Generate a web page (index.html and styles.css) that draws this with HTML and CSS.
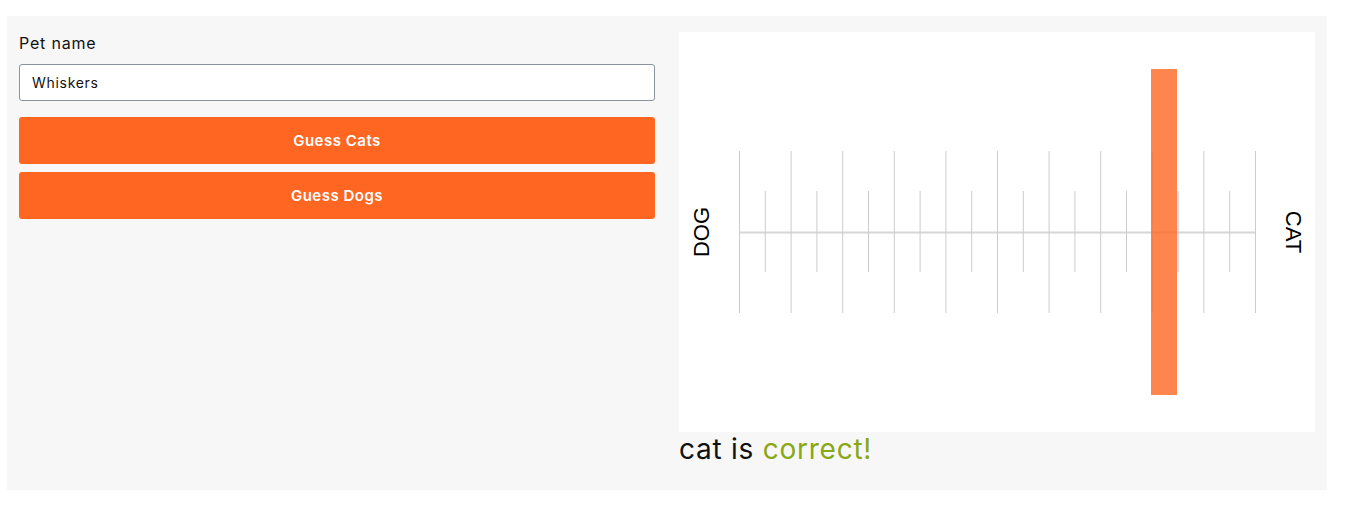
FILE: index.html
```html
<!DOCTYPE html>
<html>
<head>
<meta charset="utf-8">
<link rel="stylesheet" href="styles.css">
</head>
<body>
<div class="app">
  <div class="panel">
    <label class="label" for="pet">Pet name</label>
    <input id="pet" class="input" type="text" value="Whiskers">
    <button class="btn">Guess Cats</button>
    <button class="btn">Guess Dogs</button>
  </div>
  <div class="result">
    <div class="chart">
      <svg width="636" height="400" viewBox="0 0 636 400">
        <g stroke="#cccccc" stroke-width="1">
          <line x1="60" y1="200.5" x2="576" y2="200.5" stroke="#d6d6d6" stroke-width="2"/>
          <line x1="60.5" y1="119" x2="60.5" y2="281"/>
          <line x1="86.3" y1="159" x2="86.3" y2="240"/>
          <line x1="112.1" y1="119" x2="112.1" y2="281"/>
          <line x1="137.9" y1="159" x2="137.9" y2="240"/>
          <line x1="163.7" y1="119" x2="163.7" y2="281"/>
          <line x1="189.5" y1="159" x2="189.5" y2="240"/>
          <line x1="215.3" y1="119" x2="215.3" y2="281"/>
          <line x1="241.1" y1="159" x2="241.1" y2="240"/>
          <line x1="266.9" y1="119" x2="266.9" y2="281"/>
          <line x1="292.7" y1="159" x2="292.7" y2="240"/>
          <line x1="318.5" y1="119" x2="318.5" y2="281"/>
          <line x1="344.3" y1="159" x2="344.3" y2="240"/>
          <line x1="370.1" y1="119" x2="370.1" y2="281"/>
          <line x1="395.9" y1="159" x2="395.9" y2="240"/>
          <line x1="421.7" y1="119" x2="421.7" y2="281"/>
          <line x1="447.5" y1="159" x2="447.5" y2="240"/>
          <line x1="473.3" y1="119" x2="473.3" y2="281"/>
          <line x1="499.1" y1="159" x2="499.1" y2="240"/>
          <line x1="524.9" y1="119" x2="524.9" y2="281"/>
          <line x1="550.7" y1="159" x2="550.7" y2="240"/>
          <line x1="576.5" y1="119" x2="576.5" y2="281"/>
        </g>
        <rect x="472" y="37" width="26" height="326" fill="#ff6622" fill-opacity="0.8"/>
        <text x="0" y="0" transform="translate(24 200) rotate(-90)" text-anchor="middle" class="axis">DOG</text>
        <text x="0" y="0" transform="translate(613 200) rotate(90)" text-anchor="middle" class="axis">CAT</text>
      </svg>
    </div>
    <div class="verdict">cat is <span class="ok">correct!</span></div>
  </div>
</div>
</body>
</html>
```
FILE: styles.css
```css
body {
  margin: 0;
  padding: 16px 32px 17px 7px;
  background: #ffffff;
  font-family: "Inter", "Liberation Sans", sans-serif;
}
.app {
  background: #f7f7f7;
  display: flex;
  gap: 24px;
  padding: 16px 12px 12px 12px;
  height: 446px;
}
.panel {
  width: 636px;
  display: flex;
  flex-direction: column;
}
.label {
  font-size: 16px;
  letter-spacing: 0.8px;
  color: #111;
  line-height: 22px;
  margin-bottom: 10px;
}
.input {
  height: 37px;
  box-sizing: border-box;
  border: 1px solid #8a939e;
  border-radius: 3px;
  padding: 0 12px;
  font-family: inherit;
  font-size: 14px;
  letter-spacing: 0.7px;
  color: #111;
  background: #fff;
  margin: 0 0 16px 0;
}
.btn {
  height: 47px;
  border: none;
  border-radius: 3px;
  background: #ff6622;
  color: #fff;
  font-family: inherit;
  font-weight: 600;
  font-size: 15px;
  letter-spacing: 0.5px;
  margin: 0 0 8px 0;
  padding: 0;
}
.result {
  width: 636px;
  display: flex;
  flex-direction: column;
}
.chart {
  background: #fff;
  height: 400px;
}
.chart svg { display: block; }
.axis {
  font-family: "Liberation Sans", Arial, sans-serif;
  font-size: 22px;
  fill: #000;
  dominant-baseline: middle;
}
.verdict {
  font-size: 28px;
  letter-spacing: 0.75px;
  line-height: 34px;
  color: #111;
}
.ok { color: #89a814; }
```
